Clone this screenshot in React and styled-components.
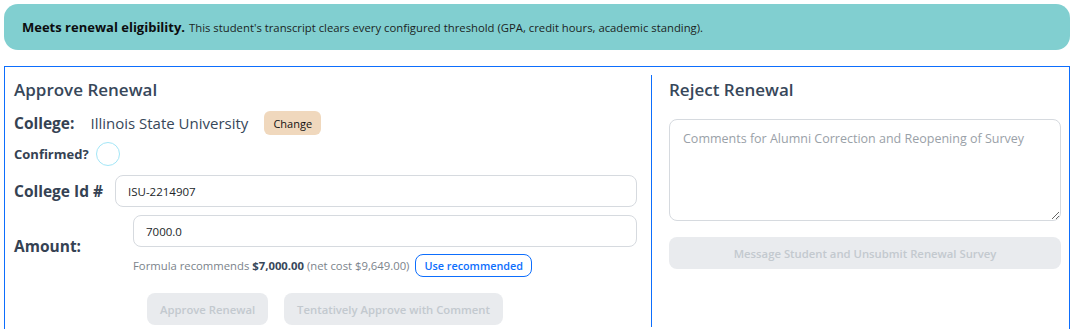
import React from "react";
import styled, { createGlobalStyle } from "styled-components";

const Global = createGlobalStyle`
  body { margin: 0; background: #fff; font-family: "Open Sans", "Noto Sans", sans-serif; color: #212529; }
  * { box-sizing: border-box; }
`;

const Page = styled.div`
  padding: 4px 4px 0 4px;
  display: flex;
  flex-direction: column;
  gap: 16px;
`;

const Banner = styled.div`
  background: #81cfd0;
  border-radius: 14px;
  height: 46px;
  padding: 0 18px;
  display: flex;
  align-items: center;
  font-size: 11.3px;
  color: #1b1f23;
  strong { font-size: 13px; font-weight: 700; margin-right: 4px; color: #0b0d0f; }
`;

const Panel = styled.div`
  border: 1px solid #0d6efd;
  padding: 8px 0 8px 0;
  display: grid;
  grid-template-columns: 647px 1fr;
  height: 270px;
`;

const Column = styled.div`
  padding: ${p => (p.$right ? "4px 8px 0 17px" : "4px 14px 0 9px")};
  border-right: ${p => (p.$right ? "none" : "1.5px solid #0d6efd")};
  display: flex;
  flex-direction: column;
`;

const Heading = styled.h2`
  margin: 0 0 ${p => p.$mb || 10}px 0;
  font-size: 17px;
  font-weight: 600;
  color: #37475a;
  line-height: 22px;
`;

const Row = styled.div`
  display: flex;
  align-items: center;
  margin-top: ${p => p.$mt || 0}px;
`;

const Label = styled.span`
  font-weight: 700;
  font-size: ${p => p.$size || 15.5}px;
  color: #354253;
  width: ${p => (p.$w ? p.$w + "px" : "auto")};
  flex: none;
`;

const Value = styled.span`
  font-size: 15px;
  color: #37475a;
  margin-left: 16px;
`;

const ChangeBtn = styled.button`
  margin-left: 16px;
  background: #f0d8bd;
  border: none;
  border-radius: 6px;
  height: 24px;
  padding: 0 9px;
  font-family: inherit;
  font-size: 11px;
  color: #111;
`;

const Circle = styled.span`
  width: 24px;
  height: 24px;
  border-radius: 50%;
  border: 1.5px solid #a3e6f7;
  margin-left: 7px;
  display: inline-block;
`;

const Input = styled.input`
  flex: ${p => (p.$stack ? "none" : 1)};
  width: ${p => (p.$stack ? "100%" : "auto")};
  height: 32px;
  border: 1px solid #d6dadf;
  border-radius: 8px;
  padding: 0 12px;
  font-family: inherit;
  font-size: 11.5px;
  color: #212529;
  outline: none;
`;

const AmountBlock = styled.div`
  display: flex;
  align-items: center;
  margin-top: 8px;
`;

const AmountFields = styled.div`
  flex: 1;
  display: flex;
  flex-direction: column;
  gap: 7px;
`;

const Hint = styled.div`
  display: flex;
  align-items: center;
  height: 23px;
  font-size: 11.3px;
  color: #7b838b;
  white-space: pre;
  b { color: #37475a; font-weight: 700; }
`;

const OutlineBtn = styled.button`
  margin-left: 6px;
  height: 23px;
  padding: 0 8px;
  border: 1px solid #0d6efd;
  border-radius: 8px;
  background: #fff;
  color: #0d6efd;
  font-family: inherit;
  font-size: 10.8px;
  font-weight: 600;
`;

const Actions = styled.div`
  display: flex;
  gap: 16px;
  margin-top: ${p => p.$mt || 0}px;
  padding-left: ${p => p.$pl || 0}px;
`;

const GhostBtn = styled.button`
  height: 32px;
  padding: 0 13px;
  border: none;
  border-radius: 8px;
  background: #e9ebee;
  color: #c3c9cf;
  font-family: inherit;
  font-size: 11.3px;
  font-weight: 600;
  flex: ${p => (p.$full ? 1 : "none")};
`;

const TextArea = styled.textarea`
  height: 102px;
  width: 100%;
  border: 1px solid #d6dadf;
  border-radius: 8px;
  padding: 10px 13px;
  font-family: inherit;
  font-size: 12.5px;
  resize: vertical;
  outline: none;
  &::placeholder { color: #9aa1a8; }
`;

export default function App() {
  return (
    <>
      <Global />
      <Page>
        <Banner>
          <strong>Meets renewal eligibility.</strong>
          This student's transcript clears every configured threshold (GPA, credit hours, academic standing).
        </Banner>
        <Panel>
          <Column>
            <Heading>Approve Renewal</Heading>
            <Row>
              <Label>College:</Label>
              <Value>Illinois State University</Value>
              <ChangeBtn>Change</ChangeBtn>
            </Row>
            <Row $mt={7}>
              <Label $size={13}>Confirmed?</Label>
              <Circle />
            </Row>
            <Row $mt={9}>
              <Label $w={101}>College Id #</Label>
              <Input defaultValue="ISU-2214907" />
            </Row>
            <AmountBlock>
              <Label $w={119}>Amount:</Label>
              <AmountFields>
                <Input $stack defaultValue="7000.0" />
                <Hint>
                  Formula recommends <b>$7,000.00</b> (net cost $9,649.00)
                  <OutlineBtn>Use recommended</OutlineBtn>
                </Hint>
              </AmountFields>
            </AmountBlock>
            <Actions $mt={16} $pl={133}>
              <GhostBtn disabled>Approve Renewal</GhostBtn>
              <GhostBtn disabled>Tentatively Approve with Comment</GhostBtn>
            </Actions>
          </Column>
          <Column $right>
            <Heading $mb={18}>Reject Renewal</Heading>
            <TextArea placeholder="Comments for Alumni Correction and Reopening of Survey" />
            <Actions $mt={16}>
              <GhostBtn disabled $full>Message Student and Unsubmit Renewal Survey</GhostBtn>
            </Actions>
          </Column>
        </Panel>
      </Page>
    </>
  );
}
